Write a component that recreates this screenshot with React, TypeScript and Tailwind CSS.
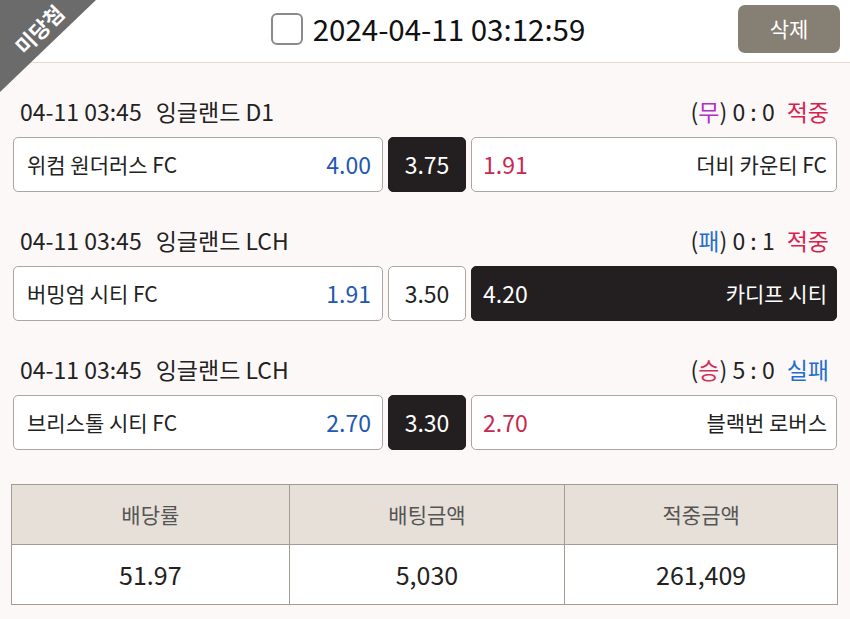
import React from "react";

type Pick = "home" | "draw" | "away";

type Match = {
  time: string;
  league: string;
  home: string;
  away: string;
  odds: [string, string, string];
  pick: Pick;
  result: { label: string; cls: string };
  score: string;
  hit: boolean;
};

const matches: Match[] = [
  {
    time: "04-11 03:45",
    league: "잉글랜드 D1",
    home: "위컴 원더러스 FC",
    away: "더비 카운티 FC",
    odds: ["4.00", "3.75", "1.91"],
    pick: "draw",
    result: { label: "무", cls: "text-[#b12fc6]" },
    score: "0 : 0",
    hit: true,
  },
  {
    time: "04-11 03:45",
    league: "잉글랜드 LCH",
    home: "버밍엄 시티 FC",
    away: "카디프 시티",
    odds: ["1.91", "3.50", "4.20"],
    pick: "away",
    result: { label: "패", cls: "text-[#1f6fd1]" },
    score: "0 : 1",
    hit: true,
  },
  {
    time: "04-11 03:45",
    league: "잉글랜드 LCH",
    home: "브리스톨 시티 FC",
    away: "블랙번 로버스",
    odds: ["2.70", "3.30", "2.70"],
    pick: "draw",
    result: { label: "승", cls: "text-[#d0305a]" },
    score: "5 : 0",
    hit: false,
  },
];

const boxBase = "flex h-[55px] items-center rounded-[5px] border text-[21px]";
const boxIdle = "border-[#aca6a2] bg-white text-[#222]";
const boxOn = "border-[#231f20] bg-[#231f20] text-white";

function MatchRow({ m }: { m: Match }) {
  return (
    <div className="pt-[32px]">
      <div className="flex h-[32px] items-center justify-between pl-[7px] pr-[8px] text-[23px] text-[#222]">
        <span>
          {m.time}
          <span className="ml-[14px]">{m.league}</span>
        </span>
        <span>
          (<span className={m.result.cls}>{m.result.label}</span>) {m.score}
          <span className={"ml-[12px] " + (m.hit ? "text-[#d6224f]" : "text-[#1f6fd1]")}>
            {m.hit ? "적중" : "실패"}
          </span>
        </span>
      </div>
      <div className="mt-[10px] flex gap-[5px]">
        <div
          className={`${boxBase} ${m.pick === "home" ? boxOn : boxIdle} flex-1 justify-between pl-[13px] pr-[11px]`}
        >
          <span>{m.home}</span>
          <span className={"text-[23px] " + (m.pick === "home" ? "" : "text-[#2257b3]")}>{m.odds[0]}</span>
        </div>
        <div
          className={`${boxBase} ${m.pick === "draw" ? boxOn : boxIdle} w-[78px] justify-center text-[23px]`}
        >
          {m.odds[1]}
        </div>
        <div
          className={`${boxBase} ${m.pick === "away" ? boxOn : boxIdle} flex-1 justify-between pl-[11px] pr-[9px]`}
        >
          <span className={"text-[23px] " + (m.pick === "away" ? "" : "text-[#c8284f]")}>{m.odds[2]}</span>
          <span>{m.away}</span>
        </div>
      </div>
    </div>
  );
}

export default function App() {
  return (
    <div
      className="relative h-[619px] w-[850px] overflow-hidden bg-[#fcf8f7]"
      style={{ fontFamily: '"Noto Sans CJK KR", "Noto Sans", sans-serif' }}
    >
      {/* corner ribbon */}
      <div className="absolute left-0 top-0 z-10 h-[92px] w-[96px] bg-[#6b6b6b] [clip-path:polygon(0_0,100%_0,0_100%)]" />
      <span className="absolute left-[1px] top-[17px] z-10 h-[24px] w-[76px] -rotate-45 text-center text-[21px] font-bold leading-[24px] text-white">
        미당첨
      </span>

      <header className="relative flex h-[63px] items-center justify-center border-b border-[#ecd8d0] bg-white pb-[4px]">
        <div className="flex items-center gap-[10px] pl-[6px]">
          <span className="h-[32px] w-[32px] rounded-[6px] border-2 border-[#8a8a8a] bg-white" />
          <span className="text-[29.5px] leading-none text-[#111]">2024-04-11 03:12:59</span>
        </div>
        <button className="absolute right-[10px] top-[5px] h-[48px] w-[102px] rounded-[7px] bg-[#867f73] text-[21px] text-white">
          삭제
        </button>
      </header>

      <main className="px-[13px]">
        {matches.map((m, i) => (
          <MatchRow key={i} m={m} />
        ))}

        <table className="mt-[34px] w-[827px] -translate-x-[2px] border-collapse text-center">
          <thead>
            <tr className="h-[60px] bg-[#e7e0d8] text-[21px] text-[#555]">
              <th className="w-[278px] border border-[#a39b94] font-normal">배당률</th>
              <th className="w-[276px] border border-[#a39b94] font-normal">배팅금액</th>
              <th className="w-[273px] border border-[#a39b94] font-normal">적중금액</th>
            </tr>
          </thead>
          <tbody>
            <tr className="h-[60px] bg-white text-[25px] text-[#222]">
              <td className="border border-[#a39b94]">51.97</td>
              <td className="border border-[#a39b94]">5,030</td>
              <td className="border border-[#a39b94]">261,409</td>
            </tr>
          </tbody>
        </table>
      </main>
    </div>
  );
}
